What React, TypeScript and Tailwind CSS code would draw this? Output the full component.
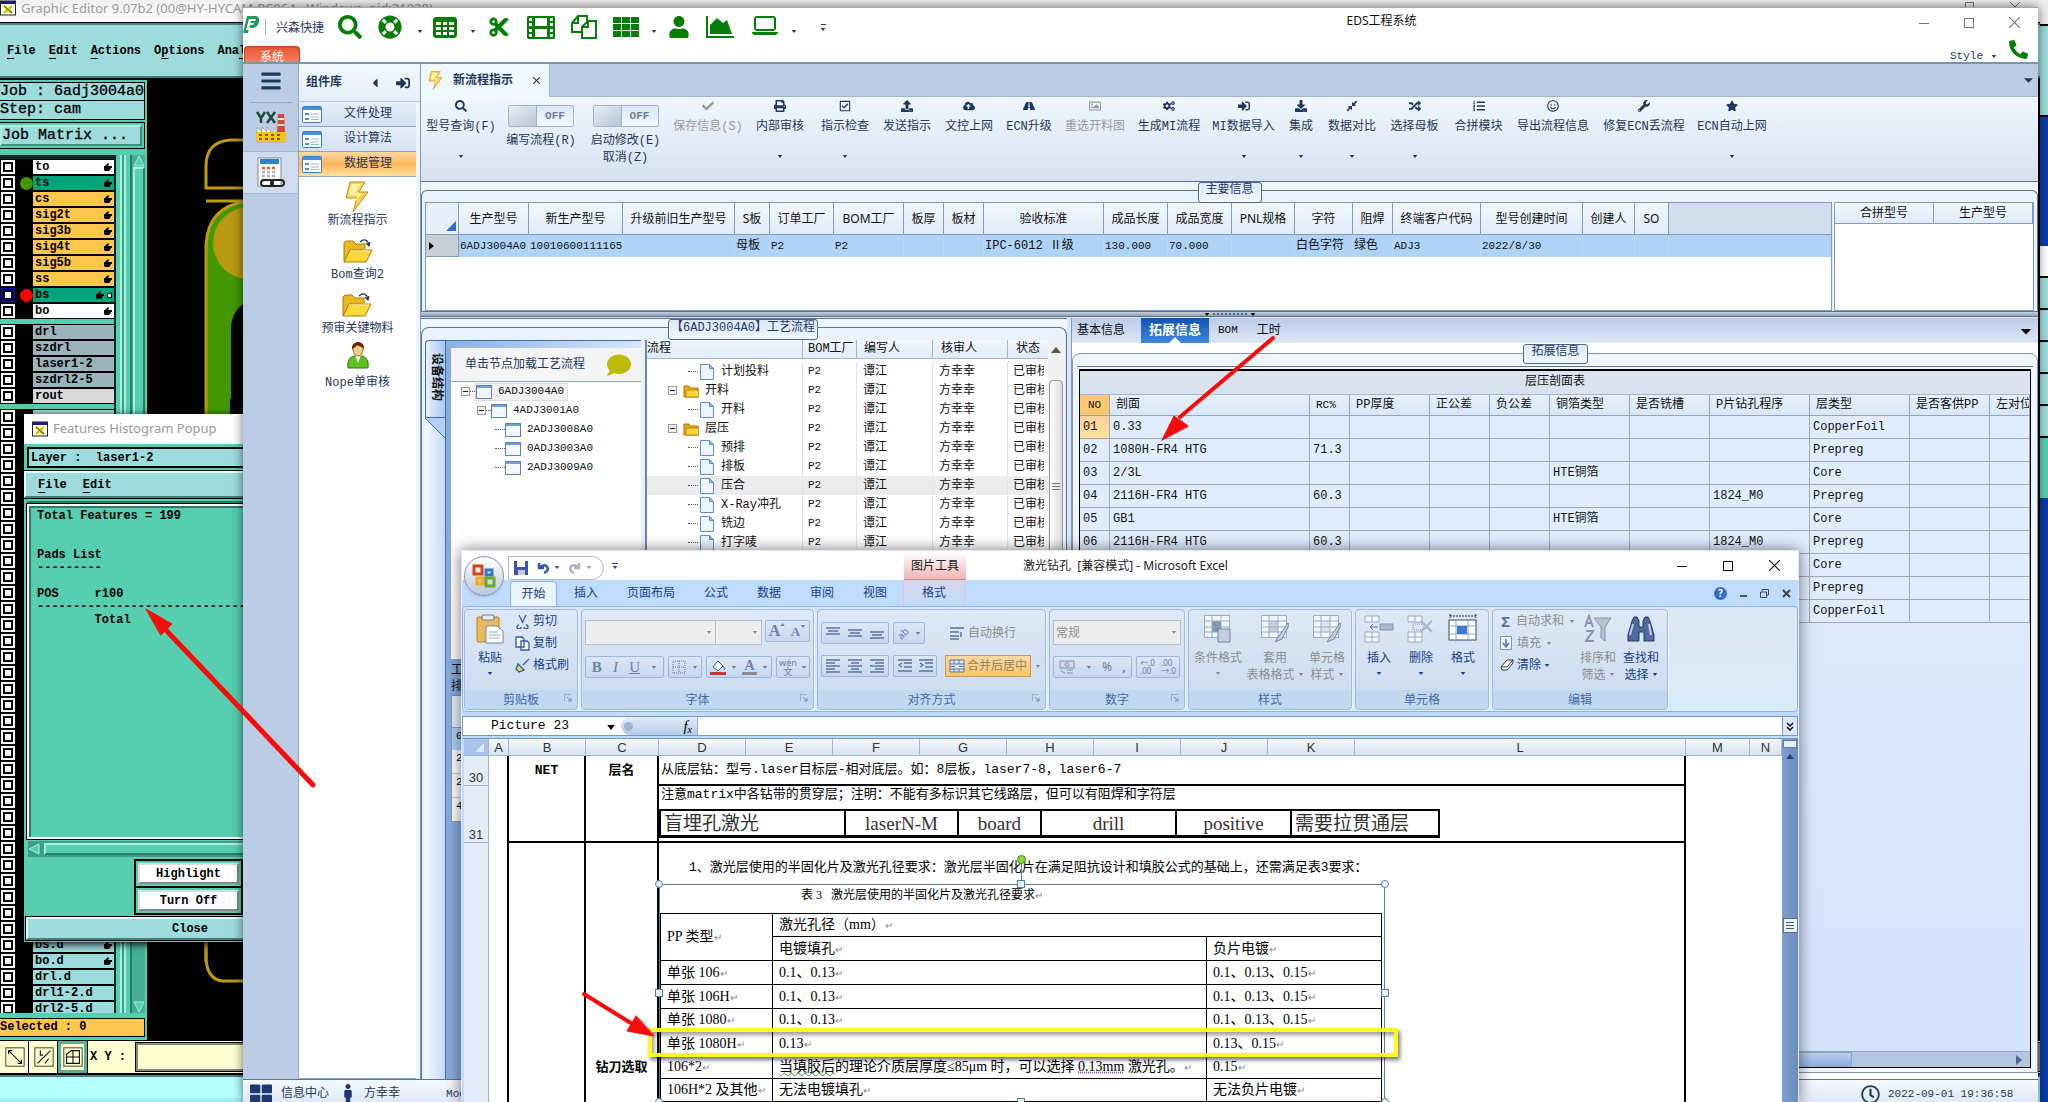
import React from "react";
import {
  FaSearch, FaLifeRing, FaCut, FaUser, FaPhone, FaPrint, FaCheck, FaRegCheckSquare, FaUpload,
  FaCloudUploadAlt, FaRoad, FaRegImage, FaCogs, FaSignInAlt, FaDownload, FaCompressAlt, FaRandom,
  FaListOl, FaRegSmile, FaWrench, FaStar, FaMale, FaThLarge, FaRegClock, FaCaretDown, FaBars,
  FaCaretLeft, FaComment,
} from "react-icons/fa";

const MONO = "[font-family:'Liberation_Mono','Noto_Sans_CJK_SC',monospace]";
const SANS = "[font-family:'Noto_Sans','Noto_Sans_CJK_SC',sans-serif]";
const SERIF = "[font-family:'Liberation_Serif','Noto_Sans_CJK_SC',serif]";

/* ---------- small shared drawings ---------- */

const Caret = ({ className = "" }: { className?: string }) => (
  <svg viewBox="0 0 6 4" className={"h-[3px] w-[6px] shrink-0 " + className} fill="currentColor"><path d="M0 0h6L3 4z" /></svg>
);

const Bolt = ({ className }: { className: string }) => (
  <svg viewBox="0 0 24 32" className={className}>
    <path d="M5 1h15l-6 10h9L8 31l4-14H1z" fill="#fbd64c" stroke="#b98a1c" strokeWidth="1" />
    <path d="M7 3h9l-6 9h7l-7 9 3-7H4z" fill="#fff3b0" />
  </svg>
);

const Folder = () => (
  <svg viewBox="0 0 32 26" className="h-[26px] w-[32px]">
    <path d="M2 24V5l2-2h7l3 3h9v5" fill="#e9b920" stroke="#a87a10" />
    <path d="M2 24l6-12h22l-6 12z" fill="#fbd83a" stroke="#a87a10" />
    <path d="M8 13h20" stroke="#fff4b0" />
    <path d="M18 4c4-4 8-2 9 3m-3-2l3 3 1-4" fill="none" stroke="#333" strokeWidth="1.2" />
  </svg>
);

const Person = () => (
  <svg viewBox="0 0 24 30" className="-mt-2 h-[30px] w-[24px]">
    <path d="M2 28c-1-8 2-11 6-12h8c4 1 7 4 6 12z" fill="#5fc21c" stroke="#2c7a08" />
    <path d="M9 15l3 8 3-8z" fill="#fff" />
    <path d="M7 5q5-4 10 0v5q-1 6-5 6t-5-6z" fill="#f2cf8e" stroke="#a06a30" />
    <path d="M6 10C5 0 19-1 18 10c-1-4-5-3-7-5-1 3-4 2-5 5z" fill="#7a2008" />
  </svg>
);

const WinIcon = () => (
  <svg viewBox="0 0 16 14" className="h-[14px] w-[16px] shrink-0">
    <rect x=".5" y=".5" width="15" height="13" fill="#f4f9ff" stroke="#5b83b5" />
    <path d="M1 2h14" stroke="#6ea0dc" strokeWidth="2" />
  </svg>
);

const PageIcon = () => (
  <svg viewBox="0 0 14 16" className="h-[16px] w-[14px] shrink-0">
    <path d="M.5.5h9l4 4v11H.5z" fill="#eef5ff" stroke="#5d8fd0" />
    <path d="M9.500.5v4h4z" fill="#8db7ee" stroke="#5d8fd0" />
  </svg>
);

const FolderSmall = () => (
  <svg viewBox="0 0 16 14" className="h-[14px] w-[16px] shrink-0">
    <path d="M1 13V2h5l1 2h8v9z" fill="#e8a818" stroke="#b07808" />
    <path d="M3 12V6h13v7H4z" fill="#ffd23c" stroke="#c08a10" />
  </svg>
);

const Expander = () => (
  <svg viewBox="0 0 9 9" className="h-[9px] w-[9px] shrink-0">
    <rect x=".5" y=".5" width="8" height="8" fill="#f2f2f2" stroke="#999" />
    <path d="M2 4.500h5" stroke="#222" />
  </svg>
);

const XIcon = () => (
  <svg viewBox="0 0 16 16" className="h-[16px] w-[16px] shrink-0">
    <rect x=".5" y="1" width="15" height="14" fill="#fff" stroke="#222" />
    <path d="M1 2.500h14" stroke="#1c1c7a" strokeWidth="3" />
    <path d="M4 6l8 7M12 6l-8 7" stroke="#d9c800" strokeWidth="2.500" />
    <path d="M4 6l8 7" stroke="#222" strokeWidth=".8" />
  </svg>
);

const Hand = () => (
  <svg viewBox="0 0 8 8" className="h-[8px] w-[8px]" fill="#000"><path d="M0 3h1l3-3 1 1-1 2h4v2H7l-1 2-1 1H1L0 7z" /></svg>
);

/* ---------- graphic editor ---------- */

type Layer = { name: string; bg: string; hand?: boolean; dot?: string; sel?: boolean };
const W = "bg-white", G = "bg-[#03a67c]", O = "bg-[#fdc64d]", S = "bg-[#9ab3bd]", C = "bg-[#9ddcdd]";
const board: Layer[] = [
  { name: "to", bg: W, hand: true },
  { name: "ts", bg: G, hand: true, dot: "bg-[#439800]" },
  { name: "cs", bg: O, hand: true },
  { name: "sig2t", bg: O, hand: true },
  { name: "sig3b", bg: O, hand: true },
  { name: "sig4t", bg: O, hand: true },
  { name: "sig5b", bg: O, hand: true },
  { name: "ss", bg: O, hand: true },
  { name: "bs", bg: G, hand: true, dot: "bg-[#ff0000]", sel: true },
  { name: "bo", bg: W, hand: true },
];
const drills: Layer[] = [
  { name: "drl", bg: S }, { name: "szdrl", bg: S }, { name: "laser1-2", bg: S }, { name: "szdrl2-5", bg: S },
  { name: "rout", bg: "bg-[#d9d9d9]" },
];
const misc: Layer[] = [
  ...Array.from({ length: 33 }, () => ({ name: "", bg: C })),
  { name: "bs.d", bg: C, hand: true }, { name: "bo.d", bg: C, hand: true },
  { name: "drl.d", bg: C }, { name: "drl1-2.d", bg: C }, { name: "drl2-5.d", bg: C },
];

const LayerRows = ({ rows, group }: { rows: Layer[]; group: string }) => (
  <div className="shrink-0 bg-black">
    {rows.map((l, i) => (
      <label key={i} className="flex h-4 items-center">
        <input
          type="checkbox"
          aria-label={l.name || `${group} ${i + 1}`}
          className={(l.sel ? "border-[#0a0a9a]" : "border-white") + " ml-px size-[14px] shrink-0 appearance-none border-2 bg-white shadow-[inset_0_0_0_2px_#000]"}
        />
        <span className="flex w-[18px] shrink-0 items-center justify-center">
          {l.dot && <span className={"ml-1 size-[13px] shrink-0 rounded-full " + l.dot} />}
        </span>
        <span className={"flex h-[14px] w-[81px] items-center justify-between pr-[2px] pl-[2px] leading-[14px] " + l.bg}>
          {l.name}
          <span className="flex items-center gap-[3px]">
            {l.hand && <Hand />}
            {l.sel && <span className="size-[5px] border border-black bg-white" />}
          </span>
        </span>
      </label>
    ))}
  </div>
);

const bevel = "border-2 border-t-[#a9f0de] border-l-[#a9f0de] border-r-[#3f8f7c] border-b-[#3f8f7c]";

const Histogram = () => (
  <section className={MONO + " absolute top-[414px] left-[24px] flex h-[528px] w-[400px] flex-col bg-[#55cfb0] text-[12px] font-bold shadow-[0_2px_8px_#000]"}>
    <h2 className={SANS + " flex h-[30px] items-center gap-[5px] bg-white pl-2 text-[13px] font-normal text-[#9a9a9a]"}>
      <XIcon />Features Histogram Popup
    </h2>
    <div className="mt-[3px] ml-[3px] flex h-[21px] items-center border-2 border-black bg-[#9ddcdd] pl-[2px]">
      <span className="whitespace-pre">Layer :  laser1-2</span>
    </div>
    <nav className="mt-[3px] flex h-[27px] items-center gap-4 border-2 border-t-[#e0ffff] border-l-[#e0ffff] border-b-[#3f7f7c] bg-[#9ddcdd] pl-3 outline outline-black">
      <button className="leading-4"><u className="underline-offset-4">F</u>ile</button>
      <button className="leading-4"><u className="underline-offset-4">E</u>dit</button>
    </nav>
    <div className="mt-[6px] ml-[3px] h-[335px] border-2 border-white border-t-white bg-[#55cfb0] shadow-[inset_1px_1px_0_1px_#2d7a68,0_-3px_0_#2d7a68] outline outline-black">
      <pre className={MONO + " pt-[4px] pl-[8px] leading-[13px]"}>{`Total Features = 199


Pads List
---------

POS     r100
------------------------------
        Total`}</pre>
    </div>
    <div className="mt-[2px] ml-1 flex h-[16px] items-center bg-[#3f9f86]">
      <svg viewBox="0 0 12 12" className="h-3 w-3"><path d="M11 1L1 6l10 5z" fill="#55cfb0" stroke="#a9f0de" /></svg>
      <span className="ml-1 h-3 flex-1 border-2 border-t-[#a9f0de] border-l-[#a9f0de] border-b-[#2d7a68] bg-[#55cfb0]" />
    </div>
    <div className="mt-[2px] ml-[110px] flex w-[109px] flex-col border-2 border-black">
      <button className="m-[2px] h-[21px] border-2 border-r-[#888] border-b-[#888] border-t-[#ddd] border-l-[#ddd] bg-white">Highlight</button>
      <span className="h-[2px] bg-black" />
      <button className="m-[2px] h-[21px] border-2 border-r-[#888] border-b-[#888] border-t-[#ddd] border-l-[#ddd] bg-white">Turn Off</button>
    </div>
    <button className="mt-[2px] ml-[2px] h-[23px] border-2 border-t-[#e0ffff] border-l-[#e0ffff] border-b-[#3f7f7c] bg-[#9ddcdd] text-left outline outline-black"><span className="ml-[144px]">Close</span></button>
  </section>
);

const GraphicEditor = () => (
  <section className={MONO + " absolute inset-y-0 right-2 left-0 flex flex-col overflow-hidden bg-[#55cfb0] text-[12px] font-bold"}>
    <header className={SANS + " flex h-[23px] shrink-0 items-start justify-between bg-gradient-to-b from-[#f0f0f0] to-white text-[13px] font-normal text-[#9a9a9a]"}>
      <h1 className="flex items-center gap-[5px] leading-4"><XIcon />Graphic Editor 9.07b2 (00@HY-HYCAM-PC064 - Windows, pid:21028)</h1>
      <span className="flex gap-9 pr-5 text-[#777]">
        <i className="mt-[7px] h-px w-[10px] bg-[#777]" />
        <i className="mt-[2px] size-[9px] border border-[#777]" />
        <svg viewBox="0 0 10 10" className="mt-[2px] size-[10px]"><path d="M0 0l10 10M10 0L0 10" stroke="#777" /></svg>
      </span>
    </header>
    <nav className="flex h-[55px] shrink-0 items-center gap-[13px] border-t-2 border-b-2 border-t-[#557f80] border-b-[#3f7f7c] bg-[#9ddcdd] pl-[7px] outline outline-black">
      {[["", "F", "ile"], ["", "E", "dit"], ["", "A", "ctions"], ["O", "p", "tions"], ["Ana", "l", "ysis"]].map((m) => (
        <button key={m.join("")}>{m[0]}<u className="underline-offset-4">{m[1]}</u>{m[2]}</button>
      ))}
    </nav>
    <div className="flex min-h-0 flex-1">
      <aside className="flex w-[147px] shrink-0 flex-col border-t-2 border-black">
        <div className="mt-[2px] mr-[2px] h-[19px] overflow-hidden border border-l-0 border-black bg-[#9ddcdd] text-[15px] leading-[17px] font-normal whitespace-nowrap [-webkit-text-stroke:0.3px]">Job : 6adj3004a0</div>
        <div className="mr-[2px] h-[19px] border border-t-0 border-l-0 border-black bg-[#9ddcdd] text-[15px] leading-[18px] font-normal [-webkit-text-stroke:0.3px]">Step: cam</div>
        <div className="mt-[2px] mr-[2px] border border-l-0 border-black p-[2px] pl-0">
          <button className={bevel + " block h-[21px] w-full bg-[#9ddcdd] text-left text-[15px] leading-[17px] font-normal [-webkit-text-stroke:0.3px]"}>Job Matrix ...</button>
        </div>
        <div className="mt-[6px] flex h-0 min-h-0 flex-auto">
          <div className="flex min-h-0 w-[116px] shrink-0 flex-col gap-[5px] overflow-hidden border-t-4 border-r-2 border-[#0a2a20] bg-[#55cfb0]">
            <LayerRows rows={board} group="board" />
            <LayerRows rows={drills} group="drill" />
            <LayerRows rows={misc} group="misc" />
          </div>
          <div className="ml-1 w-[6px] border-x-2 border-[#a9f0de] bg-[#3f9f86]" />
          <div className="ml-1 flex w-[15px] flex-col items-center border-l-2 border-[#2d7a68] bg-[#45b095]">
            <svg viewBox="0 0 12 12" className="h-3 w-3"><path d="M6 1l5 10H1z" fill="#55cfb0" stroke="#a9f0de" /></svg>
            <span className="h-1/2 w-3 border-2 border-t-[#a9f0de] border-l-[#a9f0de] border-r-[#2d7a68] bg-[#55cfb0]" />
            <span className="flex-1" />
            <svg viewBox="0 0 12 12" className="h-3 w-3"><path d="M6 11l5-10H1z" fill="#55cfb0" stroke="#a9f0de" /></svg>
          </div>
        </div>
        <div className="mt-[5px] mr-[2px] mb-[3px] h-[19px] border border-l-0 border-black bg-[#fdc64d] leading-[17px]">Selected : 0</div>
      </aside>
      <div className="flex-1 bg-black">
        <svg viewBox="147 78 100 962" className="block h-[962px] w-[100px]">
          <path d="M250 140h-20q-24 2-24 26v22h44M206 201h44" fill="none" stroke="#ba9a10" strokeWidth="3" />
          <path d="M206 942V245q2-42 50-46v200h-26v543z" fill="#439800" />
          <path d="M231 950V330q0-22 20-30v650z" fill="#000" />
          <path d="M206 962V245q2-40 44-44" fill="none" stroke="#ba9a10" strokeWidth="3" />
          <path d="M208 942h40v100h-40z" fill="#000" />
          <path d="M206 942v18q2 20 17 21h27" fill="none" stroke="#ba9a10" strokeWidth="3" />
          <circle cx="249" cy="243" r="36" fill="#ba9a10" />
        </svg>
      </div>
    </div>
    <footer className="flex h-[35px] shrink-0 border-t border-b-2 border-black bg-[#ffffcf]">
      {["M5 5l14 14M5 9V5h4M15 19h4v-4", "M5 19L19 5M8 5v5h3M13 19l4-5", "M5 19V9l5-4h9v14zM12 5v14M5 12h14"].map((d, i) => (
        <button key={i} aria-label={["Zoom area", "Angle", "Grid"][i]} className={(i === 2 ? "border-[#55b095]" : "border-[#ffffcf]") + " flex h-[32px] w-[29px] items-center justify-center border-[3px] outline outline-black"}>
          <svg viewBox="0 0 24 24" className="size-[22px]"><rect x="2" y="2" width="20" height="20" fill="none" stroke="#333" /><path d={d} fill="none" stroke="#111" strokeWidth="1.2" /></svg>
        </button>
      ))}
      <label className="flex flex-1 items-center gap-[8px] pl-[3px] whitespace-pre">X Y :
        <input defaultValue="" aria-label="X Y" className="ml-[2px] h-[28px] flex-1 border-2 border-[#8a8a70] bg-[#ffffcf] outline outline-black" />
      </label>
    </footer>
    <div className="h-[27px] shrink-0 border-t-2 border-b-4 border-t-[#557f80] border-b-[#9df0f0] bg-[#b5ffff]" />
    <Histogram />
  </section>
);

/* ---------- EDS window ---------- */

const green = "text-[#067d06]";

const TableGlyph = () => (
  <svg viewBox="0 0 24 21" className="h-[21px] w-[24px]" fill="#067d06">
    <path fillRule="evenodd" d="M2 0h20l2 2v17l-2 2H2l-2-2V2zM3 5v3h5V5zm7 0v3h4V5zm6 0v3h5V5zM3 10v3h5v-3zm7 0v3h4v-3zm6 0v3h5v-3zM3 15v3h5v-3zm7 0v3h4v-3zm6 0v3h5v-3z" />
  </svg>
);
const FilmGlyph = () => (
  <svg viewBox="0 0 28 23" className="h-[23px] w-[28px]" fill="#067d06">
    <path fillRule="evenodd" d="M1 0h26l1 1v21l-1 1H1l-1-1V1zM2 2v3h3V2zm0 5v3h3V7zm0 6v3h3v-3zm0 5v3h3v-3zM8 2v8h12V2zm0 11v8h12v-8zM23 2v3h3V2zm0 5v3h3V7zm0 6v3h3v-3zm0 5v3h3v-3z" />
  </svg>
);
const CopyGlyph = () => (
  <svg viewBox="0 0 26 24" className="h-[24px] w-[26px]" fill="none" stroke="#067d06" strokeWidth="2">
    <path d="M11 17H1V8l6-7h9v5M7 1v7H1" /><path d="M11 12l6-6h8v17H11zM17 6v6h-6" fill="#fff" />
  </svg>
);
const TilesGlyph = () => (
  <svg viewBox="0 0 26 20" className="h-[20px] w-[26px]" fill="#067d06">
    <path d="M0 0h8v6H0zM9 0h8v6H9zM18 0h8v6h-8zM0 7h8v6H0zM9 7h8v6H9zM18 7h8v6h-8zM0 14h8v6H0zM9 14h8v6H9zM18 14h8v6h-8z" />
  </svg>
);
const ChartGlyph = () => (
  <svg viewBox="0 0 28 22" className="h-[22px] w-[28px]" fill="#067d06">
    <path d="M0 0h2v20h26v2H0z" /><path d="M4 18V9l7-7 6 5 4-3 5 14z" />
  </svg>
);
const LaptopGlyph = () => (
  <svg viewBox="0 0 26 19" className="h-[19px] w-[26px]" fill="#067d06">
    <path fillRule="evenodd" d="M4 0h18l2 2v11l-2 2H4l-2-2V2zm0 2v11h18V2zM0 16h26v1l-2 2H2l-2-2z" />
  </svg>
);

const Controls = ({ color, className }: { color: string; className: string }) => (
  <span className={"flex items-center " + className}>
    <button aria-label="Minimize"><svg viewBox="0 0 10 10" className="size-[10px]"><path d="M0 5.500h10" stroke={color} /></svg></button>
    <button aria-label="Maximize"><svg viewBox="0 0 10 10" className="size-[10px]"><rect x=".5" y=".5" width="9" height="9" fill="none" stroke={color} /></svg></button>
    <button aria-label="Close"><svg viewBox="0 0 10 10" className="size-[11px]"><path d="M0 0l10 10M10 0L0 10" stroke={color} /></svg></button>
  </span>
);

const EdsHeader = () => (
  <header className="relative flex h-[56px] shrink-0 border-b-2 border-[#7b93ad] bg-white">
    <div className="flex h-[38px] items-center">
      <svg viewBox="0 0 17 18" className="-mt-1 h-[18px] w-[17px]">
        <path d="M4 0h9q4 1 3 6t-6 6H6l-1 5H0z" fill="#1f9a5a" /><path d="M6 3h7l-1 2H8l-.5 2H11l-1 2H7l-1 5H3z" fill="#fff" />
      </svg>
      <span className="ml-[5px] h-[16px] w-px bg-[#9ab0cc]" />
      <span className="mt-[4px] ml-[10px] w-[48px] text-[12px] text-[#1e395b]">兴森快捷</span>
      <span className={"ml-[14px] flex items-center text-[24px] " + green}>
        <button aria-label="Search"><FaSearch /></button>
        <button aria-label="Help" className="ml-4"><FaLifeRing /></button>
        <Caret className="mt-2 ml-[15px] text-[#1e395b]" />
        <button aria-label="Table" className="ml-[10px]"><TableGlyph /></button>
        <Caret className="mt-2 ml-[13px] text-[#1e395b]" />
        <button aria-label="Cut" className="ml-[12px] text-[22px]"><FaCut /></button>
        <button aria-label="Film" className="ml-[17px]"><FilmGlyph /></button>
        <button aria-label="Copy" className="ml-[16px]"><CopyGlyph /></button>
        <button aria-label="Tiles" className="ml-[16px]"><TilesGlyph /></button>
        <Caret className="mt-2 ml-[12px] text-[#1e395b]" />
        <button aria-label="User" className="ml-[11px]"><FaUser className="text-[22px]" /></button>
        <button aria-label="Chart" className="ml-[16px]"><ChartGlyph /></button>
        <button aria-label="Laptop" className="-mt-1 ml-[18px]"><LaptopGlyph /></button>
        <Caret className="mt-2 ml-[13px] text-[#1e395b]" />
        <span className="ml-[23px] flex flex-col items-center gap-[3px] text-[#1e395b]"><i className="h-px w-[5px] bg-current" /><Caret /></span>
      </span>
    </div>
    <div className="absolute bottom-0 left-px h-[16px] w-[56px] overflow-hidden rounded-t-sm border border-b-0 border-[#c8401c] bg-gradient-to-b from-[#e8522c] to-[#f08060] text-center text-[12px] leading-[22px] text-white">系统</div>
    <h1 className={SANS + " absolute inset-x-0 top-[3px] text-center text-[12px] leading-5 text-[#111]"}><span className="ml-[482px]">EDS工程系统</span></h1>
    <Controls color="#777" className="absolute top-[9px] right-[18px] gap-[35px]" />
    <div className={"absolute right-[10px] bottom-0 flex h-[25px] items-center gap-[12px] overflow-hidden text-[#1e395b] " + MONO}>
      <button className="mt-[14px] flex items-center gap-[8px] text-[11px]">Style<Caret /></button>
      <button aria-label="Phone" className={"text-[19px] " + green}><FaPhone className="-scale-x-100" /></button>
    </div>
  </header>
);

const Rail = () => (
  <nav className="flex w-[56px] shrink-0 flex-col items-center border-r border-[#8fa5c3] bg-[#bbcce5]">
    <button aria-label="Menu" className="mt-[6px] mb-[10px] text-[22px] text-[#1e395b]"><FaBars /></button>
    <span className="h-px w-[42px] bg-[#93a8c6]" />
    <button aria-label="Factory" className="flex h-[48px] items-center">
      <svg viewBox="0 0 32 32" className="size-[32px]">
        <path d="M2 1l4 6v5M10 1L6 7M12 1l8 11M20 1l-8 11" stroke="#1d4a3a" strokeWidth="2.500" fill="none" />
        <path d="M22 21l1-18h6l1 18z" fill="#d04a30" /><path d="M23 8h6M22.500 14h7" stroke="#ddd" strokeWidth="2" />
        <path d="M2 22v-6l5 5v-5l5 5v-5l5 6h13v9H2z" fill="#f5f5f5" stroke="#888" strokeWidth=".6" />
        <path d="M1 21h30v10H1z" fill="#f0c418" /><path d="M4 24h3m3 0h3m3 0h3m3 0h3M4 28h3m3 0h3m3 0h3m3 0h3" stroke="#8a5a08" strokeWidth="2" />
      </svg>
    </button>
    <button aria-label="Calendar" className="flex h-[43px] w-full items-center justify-center border-y border-[#a3b6d3] bg-[#cfdcef]">
      <svg viewBox="0 0 30 32" className="h-[32px] w-[30px]">
        <rect x="2" y="1" width="23" height="28" fill="#fafafa" stroke="#888" /><rect x="4" y="2" width="19" height="5" fill="#2b86c8" />
        <path d="M6 11h3m2 0h3m2 0h3" stroke="#e0643c" strokeWidth="2.500" /><path d="M6 15h3m2 0h3m2 0h3M6 19h3m2 0h3m2 0h3M6 23h3" stroke="#b5b5c0" strokeWidth="2.500" />
        <rect x="5" y="23" width="12" height="6" rx="3" fill="none" stroke="#222" strokeWidth="2" /><rect x="15" y="23" width="13" height="6" rx="3" fill="none" stroke="#222" strokeWidth="2" />
      </svg>
    </button>
  </nav>
);

const Sidebar = () => (
  <aside className={MONO + " flex w-[122px] shrink-0 flex-col border-r border-[#7f97b8] bg-[#eef4fc] pr-1 text-[12px] text-[#1e395b]"}>
    <div className="-mr-1 flex h-[38px] shrink-0 items-center border-b border-[#b5c6de] bg-gradient-to-b from-[#f3f8fe] to-[#e6effa] pl-[7px]">
      <b className="text-[12px]">组件库</b><FaCaretLeft className="ml-[26px] text-[14px]" /><FaSignInAlt className="ml-[14px] text-[14px]" />
    </div>
    {["文件处理", "设计算法", "数据管理"].map((t, i) => (
      <button key={t} className={(i === 2 ? "bg-gradient-to-b from-[#fdd9a0] via-[#fdb65c] to-[#fee29a]" : "bg-gradient-to-b from-[#e6effa] to-[#d3e0f1]") + " flex h-[25px] shrink-0 items-center border-b border-[#8fa5c3] pl-[3px]"}>
        <svg viewBox="0 0 20 17" className="h-[17px] w-[20px]"><rect x=".5" y=".5" width="19" height="16" rx="1" fill="#fff" stroke="#3d7cc0" /><path d="M1 2.500h18" stroke="#4a90d8" strokeWidth="3" /><path d="M3 7h4v2H3zm0 5h4v2H3z" fill="#4a90d8" /><path d="M9 8h8M9 11h8M9 13.500h8" stroke="#9bb" /></svg>
        <span className="ml-[22px]">{t}</span>
      </button>
    ))}
    <ul className="flex flex-1 flex-col items-center border-b border-[#8fa5c3] bg-white pt-[4px]">
      {[["新流程指示", <Bolt className="h-[32px] w-[24px]" />], ["Bom查询2", <Folder />], ["预审关键物料", <Folder />], ["Nope单审核", <Person />]].map(([t, ic], i) => (
        <li key={i} className="h-[54px]">
          <button className="flex flex-col items-center leading-4"><span className="flex h-[32px] items-center">{ic}</span>{t}</button>
        </li>
      ))}
    </ul>
  </aside>
);

type Tool = { t: string; w: string; icon: React.ReactNode; caret?: boolean; off?: boolean };
const tools: Tool[] = [
  { t: "保存信息(S)", w: "w-[76px]", icon: <FaCheck />, off: true },
  { t: "内部审核", w: "w-[68px]", icon: <FaPrint />, caret: true },
  { t: "指示检查", w: "w-[62px]", icon: <FaRegCheckSquare />, caret: true },
  { t: "发送指示", w: "w-[62px]", icon: <FaUpload /> },
  { t: "文控上网", w: "w-[62px]", icon: <FaCloudUploadAlt /> },
  { t: "ECN升级", w: "w-[58px]", icon: <FaRoad /> },
  { t: "重选开料图", w: "w-[74px]", icon: <FaRegImage />, off: true },
  { t: "生成MI流程", w: "w-[74px]", icon: <FaCogs /> },
  { t: "MI数据导入", w: "w-[75px]", icon: <FaSignInAlt />, caret: true },
  { t: "集成", w: "w-[40px]", icon: <FaDownload />, caret: true },
  { t: "数据对比", w: "w-[62px]", icon: <FaCompressAlt />, caret: true },
  { t: "选择母板", w: "w-[63px]", icon: <FaRandom />, caret: true },
  { t: "合拼模块", w: "w-[65px]", icon: <FaListOl /> },
  { t: "导出流程信息", w: "w-[84px]", icon: <FaRegSmile /> },
  { t: "修复ECN丢流程", w: "w-[98px]", icon: <FaWrench /> },
  { t: "ECN自动上网", w: "w-[78px]", icon: <FaStar />, caret: true },
];

const ToolButton = ({ tool }: { tool: Tool }) => (
  <button className={tool.w + " flex shrink-0 flex-col items-center whitespace-nowrap " + (tool.off ? "text-[#9a9a9a]" : "")}>
    <span className="text-[12px]">{tool.icon}</span>
    <span className="mt-[6px] leading-[18px]">{tool.t}</span>
    {tool.caret && <Caret className="mt-[19px]" />}
  </button>
);

const Toggle = ({ label, children, w }: { label: string; children: React.ReactNode; w: string }) => (
  <div className={w + " flex shrink-0 flex-col items-center pt-[5px]"}>
    <button role="switch" aria-checked="false" aria-label={label} className="flex h-[22px] w-[66px] items-center rounded-[2px] border border-[#9fb3cf] bg-gradient-to-b from-[#dde8f5] to-[#f2f7fd]">
      <span className="h-full w-[28px] border-r border-[#9fb3cf] bg-gradient-to-br from-[#e8eef6] to-[#b9c6d6]" />
      <b className="flex-1 text-center text-[11px] text-[#6b7d94]">OFF</b>
    </button>
    <span className="mt-[6px] text-center leading-[17px]">{children}</span>
  </div>
);

const legendCls = "absolute z-10 flex justify-center rounded-[3px] border border-[#4f6a8c] bg-gradient-to-b from-[#dde9f7] to-[#eff6fe] text-[12px] text-[#1e3970]";

const mainCols: [string, string, string][] = [
  ["生产型号", "w-[70px]", "6ADJ3004A0"], ["新生产型号", "w-[94px]", "10010600111165"], ["升级前旧生产型号", "w-[112px]", ""],
  ["S板", "w-[35px]", "母板"], ["订单工厂", "w-[64px]", "P2"], ["BOM工厂", "w-[70px]", "P2"], ["板厚", "w-[40px]", ""],
  ["板材", "w-[40px]", ""], ["验收标准", "w-[120px]", "IPC-6012 Ⅱ级"], ["成品长度", "w-[64px]", "130.000"],
  ["成品宽度", "w-[64px]", "70.000"], ["PNL规格", "w-[63px]", ""], ["字符", "w-[58px]", "白色字符"], ["阻焊", "w-[40px]", "绿色"],
  ["终端客户代码", "w-[88px]", "ADJ3"], ["型号创建时间", "w-[102px]", "2022/8/30"], ["创建人", "w-[52px]", ""], ["SO", "w-[34px]", ""],
];

const MainInfo = () => (
  <section className="relative flex h-[130px] shrink-0 flex-col border-t border-[#5a7391] bg-[#f0f6fe] pt-2">
    <h2 className={legendCls + " top-0 left-1/2 h-[21px] w-[64px] -translate-x-[32px] leading-[14px]"}>主要信息</h2>
    <div className="flex min-h-0 flex-1 gap-[2px] rounded-t-md border border-b-0 border-[#5a7391] bg-[#eaf3fd] px-[3px] pt-[11px]">
      <div className="min-w-0 flex-1 overflow-hidden border border-[#7f9bbf] bg-white">
        <table className="w-full table-fixed border-separate border-spacing-0 text-[12px] text-[#111]">
          <thead className={SANS}>
            <tr className="h-[32px]">
              <th className="w-[33px] border-r border-b border-[#7f9bbf] bg-[#e6effa] align-bottom"><svg viewBox="0 0 10 10" className="mr-[2px] mb-[3px] ml-auto size-[10px]"><path d="M10 0v10H0z" fill="#2f6fd0" /></svg></th>
              {mainCols.map(([t, w]) => <th key={t} className={w + " border-r border-b border-[#7f9bbf] bg-gradient-to-b from-[#f1f7fe] to-[#e1ebf8] p-0 font-normal whitespace-nowrap"}>{t}</th>)}
              <th className="border-b border-[#7f9bbf] bg-[#cfdded]" />
            </tr>
          </thead>
          <tbody className={MONO}>
            <tr className="h-[22px] bg-[#aed3f7]">
              <td className="border-r border-b border-[#7f9bbf] bg-[#c9cfd6] p-0"><svg viewBox="0 0 5 8" className="ml-[3px] h-2 w-[5px]"><path d="M0 0l5 4-5 4z" /></svg></td>
              {mainCols.map(([t, , v]) => <td key={t} className={(/^[\x00-\x7f]*$/.test(v) ? "text-[11px]" : "text-[12px]") + " overflow-hidden border-r border-[#bcdaf8] p-0 pl-px whitespace-nowrap"}>{v}</td>)}
              <td />
            </tr>
          </tbody>
        </table>
      </div>
      <div className="w-[200px] shrink-0 border border-[#7f9bbf] bg-white">
        <table className={SANS + " w-full table-fixed border-separate border-spacing-0 text-[12px] text-[#111]"}>
          <thead><tr className="h-[21px]">{["合拼型号", "生产型号"].map((t) => <th key={t} className="border-r border-b border-[#7f9bbf] bg-gradient-to-b from-[#f1f7fe] to-[#e1ebf8] p-0 font-normal">{t}</th>)}</tr></thead>
        </table>
      </div>
    </div>
  </section>
);

const tree: [string, string, boolean][] = [
  ["6ADJ3004A0", "pl-[10px]", true], ["4ADJ3001A0", "pl-[26px]", true],
  ["2ADJ3008A0", "pl-[46px]", false], ["0ADJ3003A0", "pl-[46px]", false], ["2ADJ3009A0", "pl-[46px]", false],
];

const steps: [string, "f" | "p"][] = [
  ["计划投料", "p"], ["开料", "f"], ["开料", "p"], ["层压", "f"], ["预排", "p"], ["排板", "p"], ["压合", "p"], ["X-Ray冲孔", "p"], ["铣边", "p"], ["打字唛", "p"],
];

const Process = () => (
  <section className={MONO + " relative flex w-[646px] shrink-0 flex-col border-t border-[#5a7391] bg-[#f0f6fe] pt-2 text-[12px] text-[#111]"}>
    <h2 className={legendCls + " top-0 left-[247px] h-[21px] w-[150px] leading-[17px] whitespace-nowrap text-[11px]"}>【6ADJ3004A0】工艺流程</h2>
    <div className="flex min-h-0 flex-1 rounded-t-lg border border-b-0 border-[#5a7391] bg-[#eaf3fd] px-[3px] pt-[12px]">
      <div className="flex w-[20px] shrink-0 flex-col bg-gradient-to-r from-[#f2f8ff] to-[#c5dbf7]">
        <div className="flex h-[78px] items-center rounded-tl border border-r-0 border-[#3f6fae] bg-gradient-to-r from-[#e8f2ff] to-[#a9c8f2] pt-[12px] leading-[18px] font-bold [text-orientation:sideways] [writing-mode:vertical-rl]">设备结构</div>
        <svg viewBox="0 0 20 20" className="h-5 w-5"><path d="M0 0h20v20z" fill="#b3cff5" /><path d="M0 0l20 20" stroke="#3f6fae" /></svg>
      </div>
      <div className="flex w-[196px] shrink-0 flex-col border-t border-l border-[#3f6fae] bg-[#88abdf]">
        <div className="h-[7px] shrink-0 bg-gradient-to-r from-[#8ab1e8] to-[#d6e6fa]" />
        <div className="ml-[5px] flex h-[34px] shrink-0 items-center border-b border-[#88a8d0] bg-[#f4f4f4] pl-[14px] text-[#1e395b]">
          单击节点加载工艺流程<FaComment className="ml-[22px] text-[24px] text-[#bdbb04]" />
        </div>
        <ul className="ml-[5px] h-[277px] shrink-0 bg-white text-[11px]">
          {tree.map(([t, pad, exp], i) => (
            <li key={t} className={"flex h-[19px] items-center " + pad}>
              {exp ? <Expander /> : <span className="-ml-[2px] w-[10px] border-b border-dotted border-[#555]" />}
              {exp && <span className="w-[5px] border-b border-dotted border-[#555]" />}
              <span className={(i === 0 ? "border border-[#ddd] bg-[#f1f1f1] " : "") + "flex h-[18px] items-center gap-[6px] pr-[3px]"}><WinIcon />{t}</span>
            </li>
          ))}
        </ul>
        <div className="ml-[5px] h-[36px] shrink-0 bg-[#84a9de] pt-1 leading-4">工<br />排</div>
        <div className="ml-[5px] shrink-0 border border-[#7f9bbf] bg-white">
          <div className="h-[31px] bg-[#e6effa]" />
          <div className="h-[22px] border-t border-[#7f9bbf] bg-[#aed3f7] pl-1 text-[11px]">0</div>
          {[2, 2, 4].map((n, i) => <div key={i} className="h-[24px] border-t border-[#c5d3e5] pl-1 text-[11px]">{n}</div>)}
        </div>
      </div>
      <div className="ml-[4px] flex min-w-0 flex-1 border-l-2 border-[#6b87ab]">
        <table className="h-fit min-w-0 flex-1 table-fixed border-separate border-spacing-0 bg-white">
          <thead>
            <tr className="h-[19px] bg-gradient-to-b from-[#f1f7fe] to-[#dfe9f6]">
              <th className="w-[156px] border-r border-b border-[#9fb8d8] p-0 text-left font-normal">流程</th>
              <th className="w-[54px] border-r border-b border-[#9fb8d8] p-0 pl-[5px] text-left font-normal whitespace-nowrap">BOM工厂</th>
              <th className="w-[76px] border-r border-b border-[#9fb8d8] p-0 pl-[7px] text-left font-normal">编写人</th>
              <th className="w-[75px] border-r border-b border-[#9fb8d8] p-0 pl-[8px] text-left font-normal">核审人</th>
              <th className="border-b border-[#9fb8d8] p-0 pl-[8px] text-left font-normal">状态</th>
            </tr>
          </thead>
          <tbody>
            <tr className="h-[3px]"><td colSpan={5} className="p-0" /></tr>
            {steps.map(([t, k], i) => (
              <tr key={i} className={"h-[19px] " + (i === 6 ? "bg-[#ececec]" : "bg-white")}>
                <td className="border-r border-[#e2e6ec] p-0">
                  <span className={"flex items-center whitespace-nowrap " + (k === "f" ? "gap-[6px] pl-[21px]" : "gap-[7px] pl-[41px]")}>
                    {k === "f" ? <><Expander /><FolderSmall /></> : <><span className="-mr-[5px] w-[10px] border-b border-dotted border-[#555]" /><PageIcon /></>}
                    {t}
                  </span>
                </td>
                <td className="border-r border-[#e2e6ec] p-0 pl-[5px] text-[11px]">P2</td>
                <td className="border-r border-[#e2e6ec] p-0 pl-[6px]">谭江</td>
                <td className="border-r border-[#e2e6ec] p-0 pl-[6px]">方幸幸</td>
                <td className="p-0 pl-[5px]"><span className="block w-[31px] overflow-hidden whitespace-nowrap">已审核</span></td>
              </tr>
            ))}
          </tbody>
        </table>
        <div className="flex w-[15px] shrink-0 flex-col items-center bg-[#f0f0f0] pt-[7px] text-[#555]">
          <svg viewBox="0 0 10 6" className="h-[6px] w-[10px]"><path d="M5 0l5 6H0z" fill="#555" /></svg>
          <span className="mt-[27px] flex h-[212px] w-[14px] flex-col items-center justify-center gap-[2px] rounded-sm border border-[#9a9a9a] bg-gradient-to-r from-white to-[#ddd]">
            <i className="h-px w-2 bg-[#777]" /><i className="h-px w-2 bg-[#777]" /><i className="h-px w-2 bg-[#777]" />
          </span>
        </div>
      </div>
    </div>
  </section>
);

const layerCols: [string, string][] = [
  ["剖面", "w-[200px]"], ["RC%", "w-[40px]"], ["PP厚度", "w-[80px]"], ["正公差", "w-[60px]"], ["负公差", "w-[60px]"],
  ["铜箔类型", "w-[80px]"], ["是否铣槽", "w-[80px]"], ["P片钻孔程序", "w-[100px]"], ["层类型", "w-[100px]"], ["是否客供PP", "w-[80px]"], ["左对位", ""],
];
const layerRows: string[][] = [
  ["0.33", "", "", "", "", "", "", "", "CopperFoil"],
  ["1080H-FR4 HTG", "71.3", "", "", "", "", "", "", "Prepreg"],
  ["2/3L", "", "", "", "", "HTE铜箔", "", "", "Core"],
  ["2116H-FR4 HTG", "60.3", "", "", "", "", "", "1824_M0", "Prepreg"],
  ["GB1", "", "", "", "", "HTE铜箔", "", "", "Core"],
  ["2116H-FR4 HTG", "60.3", "", "", "", "", "", "1824_M0", "Prepreg"],
  ["", "", "", "", "", "", "", "", "Core"],
  ["", "", "", "", "", "", "", "", "Prepreg"],
  ["", "", "", "", "", "", "", "", "CopperFoil"],
];

const Extended = () => (
  <section className={MONO + " flex min-w-0 flex-1 flex-col border-l border-[#7f97b8] bg-[#f0f6fe] text-[12px] text-[#111]"}>
    <nav className="flex h-[25px] shrink-0 items-center bg-gradient-to-b from-[#b9cbe6] to-[#dde8f6] pl-[5px]">
      <button>基本信息</button>
      <button className="relative ml-[16px] h-full w-[68px] bg-gradient-to-b from-[#0f55b5] to-[#3f86dd] text-[13px] font-bold text-white">拓展信息
        <svg viewBox="0 0 12 6" className="absolute bottom-0 left-[28px] h-[6px] w-[12px]"><path d="M6 0l6 6H0z" fill="#fff" /></svg>
      </button>
      <button className="ml-[9px] text-[11px]">BOM</button>
      <button className="ml-[19px]">工时</button>
      <FaCaretDown className="mr-[4px] ml-auto text-[16px]" />
    </nav>
    <div className="relative flex min-h-0 flex-1 flex-col bg-white pt-[10px]">
      <h2 className={legendCls + " top-px left-1/2 h-[20px] w-[65px] -translate-x-[32px] leading-[14px]"}>拓展信息</h2>
      <div className="mb-[6px] flex min-h-0 flex-1 rounded-t-lg border border-[#7f97b8] bg-[#f0f6fe] px-[4px] pt-[12px] pb-[2px]">
        <div className="flex min-w-0 flex-1 flex-col border-t border-[#5a7391] p-[2px]">
          <div className="flex min-h-0 flex-1 flex-col overflow-hidden border border-t-2 border-black bg-gradient-to-b from-[#e0ecfc] to-[#d3e3fc]">
            <h3 className="h-[24px] shrink-0 border-b border-[#9fb8d8] bg-[#dbe2ef] text-center leading-[23px]">层压剖面表</h3>
            <table className="w-full table-fixed border-separate border-spacing-0">
              <thead>
                <tr className="h-[21px] bg-gradient-to-b from-[#e6f0fc] to-[#d8e6f6]">
                  <th className="w-[30px] border-r border-b border-[#8fa5c3] bg-[#fdc870] p-0 text-[11px] font-normal">NO</th>
                  {layerCols.map(([t, w]) => <th key={t} className={w + " overflow-hidden border-r border-b border-[#8fa5c3] p-0 pl-[6px] text-left font-normal whitespace-nowrap " + (/^[\x00-\x7f]*$/.test(t) ? "text-[11px]" : "")}>{t}</th>)}
                </tr>
              </thead>
              <tbody>
                {layerRows.map((r, i) => (
                  <tr key={i} className="h-[23px] bg-[#e0edfe]">
                    <td className={(i === 0 ? "bg-gradient-to-b from-[#fdd0a0] to-[#fee29a] " : "") + "border-r border-b border-[#a0a8b4] p-0 pl-[3px]"}>{i < 6 ? "0" + (i + 1) : ""}</td>
                    {layerCols.map(([t], j) => <td key={t} className="border-r border-b border-[#a0a8b4] p-0 pl-[3px] whitespace-nowrap">{r[j] ?? ""}</td>)}
                  </tr>
                ))}
              </tbody>
            </table>
            <div className="mt-auto flex h-[16px] shrink-0 items-center justify-end border-t border-[#8fa5c3] bg-[#b3c6df]">
              <span className="mr-auto h-full w-[772px] border border-[#8fa5c3] bg-gradient-to-b from-[#b9cfee] to-[#8fb0de]" />
              <svg viewBox="0 0 6 10" className="mr-2 h-[10px] w-[6px]"><path d="M0 0l6 5-6 5z" fill="#4f6a8c" /></svg>
            </div>
          </div>
        </div>
      </div>
    </div>
  </section>
);

const EdsWindow = () => (
  <section className={"absolute top-[7px] right-[10px] bottom-0 left-[243px] flex flex-col overflow-hidden border-t border-[#a5a5a5] bg-white shadow-[0_0_10px_#0009] " + MONO}>
    <EdsHeader />
    <div className="flex min-h-0 flex-1">
      <Rail />
      <Sidebar />
      <main className="flex min-w-0 flex-1 flex-col bg-[#dbe6f4]">
        <nav className="flex h-[33px] shrink-0 items-center border-b border-[#9fb5d3] bg-[#bbcce5] text-[#1e395b]">
          <div className="-mb-px flex h-[33px] w-[129px] items-center border-r border-[#9fb5d3] bg-[#f0f7fe] pl-[7px]">
            <Bolt className="h-[19px] w-[15px]" /><b className="ml-[10px] w-[64px] text-[12px] whitespace-nowrap">新流程指示</b>
            <button aria-label="Close tab" className="ml-[16px]"><svg viewBox="0 0 8 8" className="size-[7px]"><path d="M0 0l8 8M8 0L0 8" stroke="#1e395b" strokeWidth="1.200" /></svg></button>
          </div>
          <svg viewBox="0 0 10 5" className="mr-[5px] ml-auto h-[5px] w-[9px]"><path d="M0 0h10L5 5z" fill="#1e395b" /></svg>
        </nav>
        <div className="flex h-[84px] shrink-0 overflow-hidden bg-gradient-to-b from-[#eff6fe] to-[#d7e2f0] pt-[3px] text-[12px] text-[#1e395b]">
          <ToolButton tool={{ t: "型号查询(F)", w: "w-[80px]", icon: <FaSearch />, caret: true }} />
          <Toggle label="编写流程" w="w-[80px]">编写流程(R)</Toggle>
          <Toggle label="启动修改" w="w-[89px]">启动修改(E)<br />取消(Z)</Toggle>
          {tools.map((t) => <ToolButton key={t.t} tool={t} />)}
        </div>
        <MainInfo />
        <div className="flex h-[6px] shrink-0 items-center justify-center gap-[3px] border-y border-[#5a7391] bg-gradient-to-b from-[#c5cfdc] to-[#8fa0b5]">
          <Caret /><span className="w-[34px] border-t-2 border-dotted border-[#4f6a8c]" /><Caret />
        </div>
        <div className="mt-px flex min-h-0 flex-1 gap-1">
          <Process />
          <Extended />
        </div>
      </main>
    </div>
    <footer className="flex h-[23px] shrink-0 items-center border-t border-[#5a7391] bg-gradient-to-b from-[#f6faff] to-[#dfe8f4] px-[7px] pt-[6px] text-[12px] text-[#1e395b]">
      <FaThLarge className="text-[22px] text-[#1e3970]" /><span className="ml-[9px]">信息中心</span>
      <FaMale className="ml-[9px] text-[20px] text-[#1e3970]" /><span className="ml-[6px]">方幸幸</span>
      <span className="ml-[46px] text-[11px]">Mode</span>
      <FaRegClock className="ml-auto text-[19px]" /><span className="mr-[16px] ml-[8px] w-[127px] text-[11px] whitespace-nowrap">2022-09-01 19:36:58</span>
    </footer>
  </section>
);

/* ---------- spreadsheet window ---------- */

const Group = ({ title, w, launcher, children }: { title: string; w: string; launcher?: boolean; children: React.ReactNode }) => (
  <fieldset aria-label={title} className={w + " flex h-[101px] min-w-0 shrink-0 flex-col overflow-hidden rounded border border-[#9dbbe0] bg-gradient-to-b from-[#dde8f5] to-[#c9dbf0] shadow-[1px_1px_0_#eaf6ff]"}>
    <div className="min-h-0 flex-1">{children}</div>
    <div className="relative h-[19px] bg-[#c1d8f0] text-center leading-[19px] text-[#3e6aaa]">{title}
      {launcher && <svg viewBox="0 0 8 8" className="absolute top-[4px] right-[5px] size-[8px]"><path d="M0 7V0h7M3 3l4 4M7 4v3H4" fill="none" stroke="#6f8fbd" /></svg>}
    </div>
  </fieldset>
);

const Big = ({ icon, lines, caret, off, w }: { icon: React.ReactNode; lines: string[]; caret?: boolean; off?: boolean; w: string }) => (
  <button className={w + " flex shrink-0 flex-col items-center pt-[3px] leading-[17px] whitespace-nowrap " + (off ? "text-[#8d8d8d]" : "text-[#15428b]")}>
    <span className="mb-[4px] flex h-[32px] items-center">{icon}</span>
    {lines.map((l, i) => (
      <span key={l} className="flex items-center gap-[3px]">{l}{i === 1 && <Caret />}</span>
    ))}
    {caret && <Caret className="mt-[6px]" />}
  </button>
);

const GridIcon = ({ accent, extra }: { accent: string; extra: string }) => (
  <svg viewBox="0 0 28 28" className="size-[28px]">
    <rect x=".5" y=".5" width="25" height="22" fill="#f2f6fb" stroke="#9aabc4" />
    <rect x="8" y="6" width="9" height="11" fill={accent} />
    <path d="M1 6h25M1 12h25M1 17h25M8 1v22M17 1v22" stroke="#9aabc4" />
    <path d={extra} fill="#c3cfde" stroke="#6f86a8" />
  </svg>
);

const pill = "flex h-[22px] items-center justify-around rounded-[2px] border border-[#9bb8dc] bg-gradient-to-b from-[#dbe7f5] to-[#c5d8ee] text-[#6c80a8]";

const Lines = ({ d }: { d: string }) => <svg viewBox="0 0 16 14" className="h-[14px] w-[16px]"><path d={d} stroke="#5a74a0" strokeWidth="1.500" fill="none" /></svg>;

const Ribbon = () => (
  <div className="flex h-[106px] shrink-0 gap-[3px] rounded border border-[#8db2e3] bg-gradient-to-b from-[#dbe6f4] to-[#d9ecfb] p-px pt-[2px]">
    <Group title="剪贴板" w="w-[114px]" launcher>
      <div className="flex text-[#15428b]">
        <Big w="w-[50px]" icon={
          <svg viewBox="0 0 28 30" className="h-[30px] w-[28px]"><rect x="1" y="3" width="22" height="25" rx="1" fill="#eab95c" stroke="#b5822c" /><rect x="6" y="1" width="12" height="5" rx="1" fill="#e5e8ee" stroke="#707a8c" /><path d="M10 12h11l6 5v12H10z" fill="#fff" stroke="#6f86a8" /><path d="M13 18h9m-9 3h11m-11 3h11" stroke="#9aabc4" /></svg>
        } lines={["粘贴"]} caret />
        <div className="flex flex-col gap-[4px] pt-[2px]">
          {[["剪切", "M4 1l4 8M11 1L7 9M4 11a2 2 0 102 2M9 13a2 2 0 102-2"], ["复制", "M1 1h6l2 2v8H1zM6 5h6l2 2v7H6z"], ["格式刷", "M14 1L8 7M3 6l6 6-5 2-3-3z"]].map(([t, d], i) => (
            <button key={t} className="flex h-[18px] items-center gap-[3px]"><svg viewBox="0 0 15 15" className="size-[15px]"><path d={d} fill={i === 2 ? "#f3d160" : i === 1 ? "#fff" : "none"} stroke="#2f5aa8" strokeWidth="1.300" /></svg>{t}</button>
          ))}
        </div>
      </div>
    </Group>
    <Group title="字体" w="w-[233px]" launcher>
      <div className="flex flex-col gap-[11px] px-[3px] pt-[10px]">
        <div className="flex">
          <div className="relative">
            <select aria-label="字体" disabled className="block h-[25px] w-[131px] appearance-none border border-[#b5bfcd] bg-[#ededed] opacity-100" />
            <Caret className="absolute top-[11px] right-[4px] text-[#8d8d8d]" />
          </div>
          <div className="relative -ml-px">
            <select aria-label="字号" disabled className="block h-[25px] w-[47px] appearance-none border border-[#b5bfcd] bg-[#ededed] opacity-100" />
            <Caret className="absolute top-[11px] right-[4px] text-[#8d8d8d]" />
          </div>
          <div className={pill + " ml-[3px] w-[46px] [font-family:'Liberation_Serif',serif] font-bold"}>
            <button aria-label="增大字号" className="flex items-start text-[16px] leading-none">A<svg viewBox="0 0 6 4" className="h-[3px] w-[5px]"><path d="M3 0l3 4H0z" fill="currentColor" /></svg></button>
            <button aria-label="减小字号" className="flex items-start text-[13px] leading-none">A<Caret /></button>
          </div>
        </div>
        <div className="flex gap-[4px]">
          <div className={pill + " w-[79px] [font-family:'Liberation_Serif',serif] text-[15px]"}><b>B</b><i>I</i><u>U</u><Caret /></div>
          <div className={pill + " w-[34px]"}><svg viewBox="0 0 14 14" className="size-[14px]"><path d="M1 1h12v12H1zM7 1v12M1 7h12" fill="none" stroke="#5a74a0" strokeDasharray="1 1" /></svg><Caret /></div>
          <div className={pill + " w-[66px]"}>
            <svg viewBox="0 0 16 16" className="size-[16px]"><path d="M3 8l5-6 5 5-5 5z" fill="#fff" stroke="#34558c" /><path d="M13 7q3 3 1 4" stroke="#34558c" fill="none" /><path d="M0 13h16v3H0z" fill="#c03a30" /></svg><Caret />
            <span className="flex flex-col items-center [font-family:'Liberation_Serif',serif] text-[14px] leading-[13px] font-bold">A<i className="h-[3px] w-[15px] bg-[#8d8d8d]" /></span><Caret />
          </div>
          <div className={pill + " w-[34px]"}><span className="text-center text-[9px] leading-[9px]">wén<br />文</span><Caret /></div>
        </div>
      </div>
    </Group>
    <Group title="对齐方式" w="w-[229px]" launcher>
      <div className="flex flex-col gap-[11px] px-[3px] pt-[12px]">
        <div className="flex gap-[4px]">
          <div className={pill + " w-[68px]"}><Lines d="M1 2h14M3 5h10M1 8h14" /><Lines d="M1 4h14M3 7h10M1 10h14" /><Lines d="M1 6h14M3 9h10M1 12h14" /></div>
          <div className={pill + " w-[32px] text-[10px]"}><span className="-rotate-45">ab</span><Caret /></div>
          <button className="ml-[20px] flex items-center gap-[3px] text-[#8d8d8d]"><Lines d="M1 2h14M1 6h9M1 10h9M12 6v5M1 13h9" />自动换行</button>
        </div>
        <div className="flex gap-[4px]">
          <div className={pill + " w-[68px]"}><Lines d="M1 1h14M1 4h9M1 7h14M1 10h9M1 13h14" /><Lines d="M1 1h14M4 4h8M1 7h14M4 10h8M1 13h14" /><Lines d="M1 1h14M6 4h9M1 7h14M6 10h9M1 13h14" /></div>
          <div className={pill + " w-[44px]"}><Lines d="M1 1h14M7 4h8M7 8h8M1 12h14M5 4L2 6l3 2" /><Lines d="M1 1h14M7 4h8M7 8h8M1 12h14M2 4l3 2-3 2" /></div>
          <button className="ml-[4px] flex h-[22px] w-[86px] items-center justify-center gap-[2px] border border-[#c79a50] bg-gradient-to-b from-[#fbd9a0] to-[#fbc765] text-[#8d8668] whitespace-nowrap"><svg viewBox="0 0 16 14" className="h-[14px] w-[16px]"><path d="M1 1h14v12H1zM1 5h14M1 10h14M5 1v4M10 1v4M5 10v3M10 10v3M2 7.500h4M10 7.500h4" fill="#dde6f2" stroke="#5a74a0" /></svg>合并后居中</button>
          <Caret className="mt-[10px] text-[#8d8d8d]" />
        </div>
      </div>
    </Group>
    <Group title="数字" w="w-[136px]" launcher>
      <div className="flex flex-col gap-[11px] px-[3px] pt-[10px]">
        <div className="relative">
          <select aria-label="数字格式" disabled className="h-[25px] w-full appearance-none border border-[#b5bfcd] bg-[#ededed] pl-[2px] text-[#8d8d8d] opacity-100"><option>常规</option></select>
          <Caret className="absolute top-[11px] right-[4px] text-[#8d8d8d]" />
        </div>
        <div className="flex gap-[4px]">
          <div className={pill + " w-[79px]"}><svg viewBox="0 0 16 14" className="h-[14px] w-[16px]"><rect x="1" y="1" width="14" height="7" fill="#d0dae8" stroke="#7f93b5" /><circle cx="8" cy="4.500" r="2" fill="none" stroke="#7f93b5" /><path d="M8 10h6M8 13h6M2 11l4 2" stroke="#7f93b5" /></svg><Caret /><span>%</span><b>,</b></div>
          <div className={pill + " w-[44px] text-[8px] leading-[8px]"}><span>←.0<br />.00</span><span>.00<br />→.0</span></div>
        </div>
      </div>
    </Group>
    <Group title="样式" w="w-[164px]">
      <div className="flex">
        <Big w="w-[58px]" off caret icon={<GridIcon accent="#7f93b5" extra="M14 14h12v13H14z" />} lines={["条件格式"]} />
        <Big w="w-[56px]" off icon={<GridIcon accent="#c3cfde" extra="M27 8l-9 13-4 6 7-3 7-14z" />} lines={["套用", "表格格式"]} />
        <Big w="w-[48px]" off icon={<GridIcon accent="#dde4ee" extra="M27 8l-9 13-4 6 7-3 7-14z" />} lines={["单元格", "样式"]} />
      </div>
    </Group>
    <Group title="单元格" w="w-[134px]">
      <div className="flex pl-[2px]">
        <Big w="w-[42px]" caret icon={<svg viewBox="0 0 30 28" className="h-[28px] w-[30px]"><path d="M1 1h14v6H1zM8 1v6M1 17h14v10H1zM8 17v10M1 22h14" fill="#f2f6fb" stroke="#9aabc4" /><path d="M16 9h13v6H16z" fill="#a9b8cf" stroke="#7f93b5" /><path d="M14 12H6m3-3l-3 3 3 3" fill="none" stroke="#5a74a0" /></svg>} lines={["插入"]} />
        <Big w="w-[42px]" caret icon={<svg viewBox="0 0 28 28" className="size-[28px]"><path d="M1 1h14v6H1zM8 1v6M1 17h14v10H1zM8 17v10M1 22h14" fill="#f2f6fb" stroke="#9aabc4" /><path d="M6 9h10v6H6z" fill="none" stroke="#7f93b5" strokeDasharray="1 1" /><path d="M14 6l11 11M25 6L14 17" stroke="#a9b3c4" strokeWidth="2" /></svg>} lines={["删除"]} />
        <Big w="w-[42px]" caret icon={<svg viewBox="0 0 30 30" className="size-[30px]"><path d="M2 2h26M2 0v4M28 0v4" stroke="#222" strokeDasharray="2 1" /><rect x="1" y="6" width="27" height="20" fill="#fff" stroke="#34496c" /><path d="M1 12h27M1 20h27M8 6v22M20 6v20" stroke="#8fa5c8" /><rect x="9" y="12" width="10" height="8" fill="#3f78d8" /></svg>} lines={["格式"]} />
      </div>
    </Group>
    <Group title="编辑" w="w-[176px]">
      <div className="flex">
        <div className="flex w-[84px] flex-col gap-[4px] pt-[2px] pl-[7px]">
          <button className="flex h-[18px] items-center gap-[5px] whitespace-nowrap text-[#8d8d8d]"><b className="w-[11px] text-[15px] text-[#5a74a0]">Σ</b>自动求和<Caret /></button>
          <button className="flex h-[18px] items-center gap-[5px] text-[#8d8d8d]"><svg viewBox="0 0 12 14" className="h-[14px] w-[12px]"><path d="M.5.5h11v13H.5z" fill="#eef3f9" stroke="#7f93b5" /><path d="M6 3v7M3 7l3 4 3-4" stroke="#5a74a0" fill="none" strokeWidth="1.500" /></svg>填充<Caret /></button>
          <button className="flex h-[18px] items-center gap-[3px] text-[#15428b]"><svg viewBox="0 0 14 12" className="h-[12px] w-[14px]"><path d="M1 8l6-7h6v3l-6 7H2z" fill="#fff" stroke="#333" /><path d="M1 8h6l6-7" fill="none" stroke="#333" /></svg>清除<Caret /></button>
        </div>
        <Big w="w-[42px]" off icon={<svg viewBox="0 0 28 30" className="h-[30px] w-[28px]"><path d="M1 13L5 2l4 11M2 9h6M2 17h7l-7 10h8" fill="none" stroke="#8595b0" strokeWidth="2" /><path d="M10 4h17l-6 9v14l-4-3V13z" fill="#b9c2d0" stroke="#8595b0" /></svg>} lines={["排序和", "筛选"]} />
        <Big w="w-[44px]" icon={<svg viewBox="0 0 28 26" className="h-[26px] w-[28px]"><path d="M5 5l2-4h3l2 4v6h4V5l2-4h3l2 4 4 14v6h-10v-9h-5v9H1v-6z" fill="#4f6a9c" stroke="#22365c" /><path d="M6 8l-3 11M22 8l2 11" stroke="#c3d0e8" strokeWidth="2" /></svg>} lines={["查找和", "选择"]} />
      </div>
    </Group>
  </div>
);

const ExcelTop = () => (
  <>
    <header className="relative flex h-[29px] shrink-0 items-center bg-white">
      <button aria-label="Office" className="absolute top-[5px] left-[2px] z-10 flex size-[40px] items-center justify-center rounded-full border border-[#8a97ab] bg-gradient-to-b from-white via-[#dfe5ee] to-[#b9c6da] shadow">
        <svg viewBox="0 0 24 24" className="size-[24px]" fill="none" strokeWidth="3"><path d="M2 2h8v8H2z" stroke="#d8441c" /><path d="M14 6h6v5h-6z" stroke="#2f78c8" /><path d="M5 14h6v6H5z" stroke="#f0a81c" /><path d="M14 14h8v8h-8z" stroke="#6aa82c" /></svg>
      </button>
      <div className="mt-[4px] ml-[46px] flex h-[24px] w-[96px] items-center rounded-r-full border border-[#b5b9c2] pl-[5px] text-[#2f4f9c]">
        <svg viewBox="0 0 14 14" className="size-[14px]"><path d="M0 0h14v14H0z" fill="#3f52b0" /><path d="M3 0h8v6H3z" fill="#fff" /><path d="M4 9h7v5H4z" fill="#c5cdea" /></svg>
        <svg viewBox="0 0 14 12" className="ml-[8px] h-[12px] w-[14px]"><path d="M3 1v5h5M3 6q7-6 9 1-1 3-4 4" fill="none" stroke="#2f5ab8" strokeWidth="2.500" /></svg>
        <Caret className="ml-[4px]" />
        <svg viewBox="0 0 14 12" className="ml-[8px] h-[12px] w-[14px]"><path d="M11 1v5H6M11 6Q4 0 2 7q1 3 4 4" fill="none" stroke="#a9b3c8" strokeWidth="2.500" /></svg>
        <Caret className="ml-[4px] text-[#999]" />
      </div>
      <span className="ml-[8px] flex flex-col items-center gap-[2px] text-[#15428b]"><i className="h-px w-[6px] bg-current" /><Caret /></span>
      <span className="absolute bottom-0 left-[442px] h-[28px] w-[62px] border-b border-[#e08080] bg-gradient-to-b from-white to-[#f0b5b5] text-center leading-[28px] text-[#222]">图片工具</span>
      <h1 className="absolute left-[561px] whitespace-nowrap text-[#222]">激光钻孔&nbsp; [兼容模式] - Microsoft Excel</h1>
      <Controls color="#111" className="absolute right-[18px] gap-[36px]" />
    </header>
    <nav className="flex h-[26px] shrink-0 items-center bg-[#bfdbff] text-[#15428b]">
      <button className="mt-px ml-[48px] h-[25px] w-[47px] rounded-t border border-b-0 border-[#8db2e3] bg-[#eaf3fd]">开始</button>
      <button className="ml-[17px]">插入</button>
      <button className="ml-[29px]">页面布局</button>
      <button className="ml-[29px]">公式</button>
      <button className="ml-[29px]">数据</button>
      <button className="ml-[29px]">审阅</button>
      <button className="ml-[29px]">视图</button>
      <button className="ml-[16px] h-full w-[62px] border-x border-[#d8c5dc] bg-gradient-to-b from-[#d8d4ea] to-[#bfdbff]">格式</button>
      <span className="mr-[7px] ml-auto flex items-center gap-[13px] text-[#444]">
        <button aria-label="帮助" className="flex size-[13px] items-center justify-center rounded-full bg-[#2f6fd0] text-[10px] font-bold text-white">?</button>
        <i className="mt-[5px] h-[2px] w-[7px] bg-[#555]" />
        <svg viewBox="0 0 9 9" className="size-[9px]"><path d="M2 2V.5h6.500V6H7M.5 3h6v5.500h-6z" fill="none" stroke="#444" /></svg>
        <svg viewBox="0 0 9 9" className="size-[9px]"><path d="M1 1l7 7M8 1L1 8" stroke="#444" strokeWidth="2" /></svg>
      </span>
    </nav>
  </>
);

const Ret = () => <span className="text-[10px] text-[#888]">↵</span>;

const picRows: [string, string, string][] = [
  ["单张 106", "0.1、0.13", "0.1、0.13、0.15"], ["单张 106H", "0.1、0.13", "0.1、0.13、0.15"],
  ["单张 1080", "0.1、0.13", "0.1、0.13、0.15"], ["单张 1080H", "0.13", "0.13、0.15"],
  ["106*2", "", "0.15"], ["106H*2 及其他", "无法电镀填孔", "无法负片电镀"],
];

const handle = "absolute size-[8px] border border-[#5a7f9c] bg-[#dff3f8]";

const Picture = () => (
  <figure className={SERIF + " relative h-[218px] w-[726px] border border-[#5a7f9c] bg-white text-[14px] text-black"}>
    <figcaption className="h-[28px] pl-[141px] text-[12px] leading-[21px] whitespace-pre">表 3   激光层使用的半固化片及激光孔径要求<Ret /></figcaption>
    <table className="w-[722px] table-fixed border-collapse [&_td]:border [&_td]:border-black [&_td]:p-0 [&_td]:pt-px [&_td]:pl-[6px] [&_td]:leading-[18px] [&_td]:whitespace-nowrap">
      <colgroup><col className="w-[112px]" /><col /><col className="w-[175px]" /></colgroup>
      <tbody>
        <tr className="h-[23px]"><td rowSpan={2}>PP 类型<Ret /></td><td colSpan={2}>激光孔径（mm）<Ret /></td></tr>
        <tr className="h-[24px]"><td>电镀填孔<Ret /></td><td>负片电镀<Ret /></td></tr>
        {picRows.map(([a, b, c], i) => (
          <tr key={a} className={i === 0 || i === 1 || i === 3 ? "h-[24px]" : "h-[23px]"}>
            <td>{a}<Ret /></td>
            <td>{i === 4 ? <><span className="underline decoration-[#2c9a2c] decoration-wavy decoration-1">当填胶后</span>的理论介质层厚度≤85μm 时，可以选择 <span className="underline decoration-[#8a3ab0] decoration-dotted">0.13mm</span> 激光孔。<Ret /></> : <>{b}<Ret /></>}</td>
            <td>{c}<Ret /></td>
          </tr>
        ))}
      </tbody>
    </table>
    <span className="absolute -top-[25px] left-[361px] h-[25px] w-px bg-[#5a7f9c]" />
    <span className="absolute -top-[30px] left-[357px] size-[9px] rounded-full border border-[#4f8a1c] bg-[#8ad838]" />
    <span className={handle + " -top-[5px] -left-[5px] rounded-full"} />
    <span className={handle + " -top-[5px] left-[357px]"} />
    <span className={handle + " -top-[5px] -right-[5px] rounded-full"} />
    <span className={handle + " top-[104px] -left-[5px]"} />
    <span className={handle + " top-[104px] -right-[5px]"} />
    <span className={handle + " -bottom-[5px] -left-[5px] rounded-full"} />
    <span className={handle + " -bottom-[5px] left-[357px]"} />
    <span className={handle + " -right-[5px] -bottom-[5px] rounded-full"} />
    <span className="absolute top-[143px] -right-[14px] -left-[12px] h-[29px] border-4 border-[#fcfc1c] shadow-[2px_3px_4px_#0008,inset_2px_3px_4px_#0006]" />
  </figure>
);

const cols: [string, string][] = [
  ["A", "w-[20px]"], ["B", "w-[77px]"], ["C", "w-[73px]"], ["D", "w-[87px]"], ["E", "w-[87px]"], ["F", "w-[87px]"], ["G", "w-[87px]"],
  ["H", "w-[87px]"], ["I", "w-[87px]"], ["J", "w-[87px]"], ["K", "w-[87px]"], ["L", "w-[331px]"], ["M", "w-[64px]"], ["N", ""],
];

const RowHead = ({ n }: { n: string }) => <th className="border-r border-b border-[#9eb6ce] bg-[#e4ecf7] p-0 align-bottom text-[13px] leading-[15px] font-normal text-[#333] [font-family:'Liberation_Sans',sans-serif]">{n}</th>;

const Sheet = () => (
  <div className="flex min-h-0 flex-1 pl-[2px]">
    <div className="min-w-0 flex-1 overflow-hidden bg-white">
      <table className="w-full table-fixed border-separate border-spacing-0 text-black">
        <thead>
          <tr className="h-[17px]">
            <th className="w-[25px] border-r border-b border-[#9eb6ce] bg-[#a9c4e9] p-0"><svg viewBox="0 0 10 10" className="mr-1 ml-auto size-[9px]"><path d="M10 0v10H0z" fill="#dbe8f8" /></svg></th>
            {cols.map(([c, w]) => <th key={c} className={w + " border-r border-b border-[#9eb6ce] bg-gradient-to-b from-[#f5f8fc] to-[#d8e2f0] p-0 text-[13px] leading-[15px] font-normal text-[#333] [font-family:'Liberation_Sans',sans-serif]"}>{c}</th>)}
          </tr>
        </thead>
        <tbody className="text-[13px]">
          <tr className="h-[30px]">
            <RowHead n="30" />
            <td className="border-r-2 border-black p-0" />
            <th className="border-r-2 border-black p-0 text-[13px]">NET</th>
            <th className="border-r-2 border-black p-0">层名</th>
            <td colSpan={9} className="border-r-2 border-b-2 border-black p-0 pl-[2px] whitespace-nowrap">从底层钻：型号.laser目标层-相对底层。如：8层板，laser7-8，laser6-7</td>
            <td colSpan={2} />
          </tr>
          <tr className="h-[57px]">
            <RowHead n="31" />
            <td className="border-r-2 border-black p-0" />
            <td className="border-r-2 border-b-2 border-black p-0" />
            <td className="border-r-2 border-b-2 border-black p-0" />
            <td colSpan={9} className="border-r-2 border-b-2 border-black p-0 align-top">
              <p className="h-[23px] pl-[2px] leading-[18px] whitespace-nowrap">注意matrix中各钻带的贯穿层；注明：不能有多标识其它线路层，但可以有阻焊和字符层</p>
              <div className={SERIF + " flex h-[29px] w-[781px] divide-x-2 divide-black border-2 border-b-[3px] border-black text-center text-[19px] leading-[26px] text-[#333]"}>
                <span className="w-[185px] pl-[3px] text-left">盲埋孔激光</span><span className="w-[113px]">laserN-M</span><span className="w-[83px]">board</span>
                <span className="w-[135px]">drill</span><span className="w-[115px]">positive</span><span className="flex-1 pl-[3px] text-left">需要拉贯通层</span>
              </div>
            </td>
            <td colSpan={2} />
          </tr>
          <tr className="h-[270px]">
            <RowHead n="" />
            <td className="border-r-2 border-black p-0" />
            <td className="border-r-2 border-black p-0" />
            <th className="border-r-2 border-black p-0 pt-[215px] align-top">钻刀选取</th>
            <td colSpan={9} className="border-r-2 border-black p-0 align-top">
              <p className="h-[41px] pt-[15px] pl-[30px] leading-[20px] whitespace-nowrap">1、激光层使用的半固化片及激光孔径要求：激光层半固化片在满足阻抗设计和填胶公式的基础上，还需满足表3要求：</p>
              <Picture />
            </td>
            <td colSpan={2} />
          </tr>
        </tbody>
      </table>
    </div>
    <div className="flex w-[16px] shrink-0 flex-col items-center bg-gradient-to-r from-[#7f9fce] to-[#6a8cc0]">
      <span className="mt-px h-[8px] w-[14px] border border-[#5a7fb5] bg-[#e8f0fa]" />
      <svg viewBox="0 0 8 5" className="mt-[6px] h-[5px] w-[8px]"><path d="M4 0l4 5H0z" fill="#2c4470" /></svg>
      <span className="mt-[159px] flex h-[15px] w-[15px] flex-col items-center justify-center gap-[2px] border border-[#4f6fa5] bg-[#e8f0fa]"><i className="h-px w-2 bg-[#555]" /><i className="h-px w-2 bg-[#555]" /><i className="h-px w-2 bg-[#555]" /></span>
    </div>
  </div>
);

const Excel = () => (
  <section className="absolute top-[550px] right-[249px] bottom-0 left-[461px] flex flex-col overflow-hidden border-x border-t border-[#dfe8f4] bg-[#bfdbff] text-[12px] shadow-[0_0_14px_#0008] [font-family:'Noto_Sans','Noto_Sans_CJK_SC',sans-serif]">
    <ExcelTop />
    <Ribbon />
    <div className={"mt-[4px] flex h-[20px] shrink-0 border border-[#6f9bd0] bg-white " + MONO}>
      <input aria-label="Name box" defaultValue="Picture 23" className="w-[144px] pl-[28px] text-[13px]" />
      <Caret className="mt-[8px] h-[5px] w-[8px]" />
      <div className="ml-[6px] flex w-[77px] items-center justify-end rounded-l-full border-r border-[#8db2e3] bg-gradient-to-b from-[#e3ecf8] to-[#b5cbe8] pr-[5px]">
        <i className="mr-auto ml-[3px] size-[9px] rounded-full bg-[#9fb3d3]" />
        <i className="[font-family:'Liberation_Serif',serif] text-[15px] leading-none">f<sub className="text-[10px]">x</sub></i>
      </div>
      <input aria-label="Formula" className="min-w-0 flex-1" />
      <button aria-label="Expand" className="flex w-[15px] items-center justify-center border-l border-[#6f9bd0] bg-[#dbe8f8]"><svg viewBox="0 0 8 9" className="h-[9px] w-[8px]"><path d="M1 1l3 3 3-3M1 5l3 3 3-3" fill="none" stroke="#111" strokeWidth="1.500" /></svg></button>
    </div>
    <div className="h-[3px] shrink-0 border-b border-[#6f9bd0]" />
    <div className={"flex min-h-0 flex-1 " + MONO}><Sheet /></div>
  </section>
);

/* ---------- neighbouring windows and arrows ---------- */

const Edge = () => (
  <div className="absolute inset-y-0 right-0 flex w-2 flex-col bg-[#0a3aa8]">
    <span className="h-[24px] bg-[#eee]" />
    <span className="h-[93px] border-y-2 border-black bg-[#9ddcdd]" />
    <span className="h-[129px] bg-[#0a3aa8]" />
    <span className="h-[30px] bg-white" />
    {[0, 1, 2, 3, 4].map((i) => <span key={i} className="h-[32px] border-t-2 border-black bg-[#9ddcdd]" />)}
    <span className="h-[62px] border-t-2 border-black bg-[#55cfb0]" />
  </div>
);

const Arrows = () => (
  <svg className="pointer-events-none absolute inset-0 h-full w-full" stroke="#fb0a0a" fill="#fb0a0a" strokeLinecap="round">
    <path d="M313 785L163 627" strokeWidth="5" /><path d="M146 609l26 15-11 11z" />
    <path d="M1273 338L1180 417" strokeWidth="4" /><path d="M1162 440l12-24 14 10z" />
    <path d="M584 994l50 31" strokeWidth="4" /><path d="M654 1036l-27-5 9-15z" />
  </svg>
);

export default function App() {
  return (
    <div className="relative h-screen w-full overflow-hidden bg-[#0a3aa8]">
      <GraphicEditor />
      <Edge />
      <EdsWindow />
      <Excel />
      <Arrows />
    </div>
  );
}
